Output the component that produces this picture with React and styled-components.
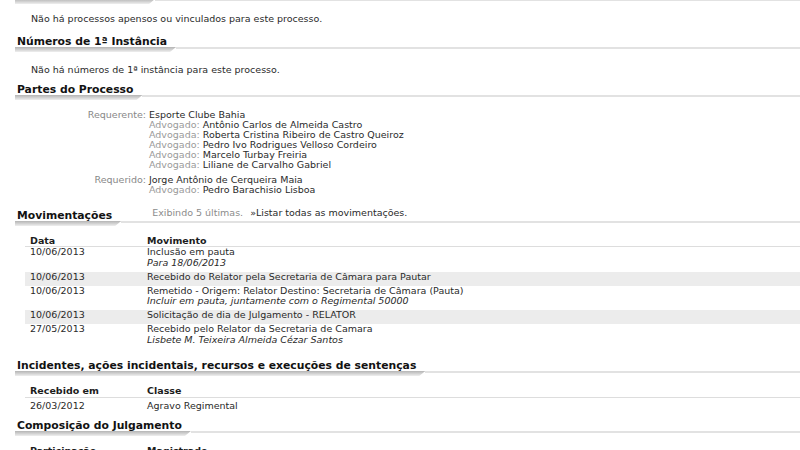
import React from "react";
import styled, { createGlobalStyle } from "styled-components";

const GlobalStyle = createGlobalStyle`
  html, body { margin: 0; padding: 0; background: #fff; }
  body {
    width: 800px;
    height: 450px;
    overflow: hidden;
    font-family: "DejaVu Sans", Verdana, sans-serif;
    font-size: 9.5px;
    color: #2a2a2a;
  }
`;

/* the page is scrolled a little: the first heading sits just above the fold */
const Page = styled.main`
  margin-top: -12px;
  padding-left: 15px;
`;

const Section = styled.section``;

const Heading = styled.h2`
  display: flex;
  align-items: flex-end;
  margin: 0;
  font: bold 10.8px/12px "DejaVu Sans", Verdana, sans-serif;
  color: #121212;
`;

const HeadingTitle = styled.span`
  position: relative;
  z-index: 0;
  padding: 0 9px 4px 2px;
  white-space: nowrap;

  &::after {
    content: "";
    position: absolute;
    z-index: -1;
    left: 0;
    right: 0;
    bottom: 0;
    height: 5px;
    background: linear-gradient(#b4b4b4, #d4d4d4 55%, #efefef);
    clip-path: polygon(0 0, 100% 0, calc(100% - 6px) 100%, 0 100%);
  }
`;

const HeadingRule = styled.div`
  flex: 1;
  display: flex;
  align-items: flex-end;
  gap: 7px;
  margin-bottom: 3px;
  padding: 0 0 ${(p) => (p.$inset ? 3 : 0)}px ${(p) => p.$inset || 0}px;
  border-bottom: 2px solid #e2e2e2;
  font: 9.5px/10px "DejaVu Sans", Verdana, sans-serif;
  color: #2a2a2a;
`;

const Hint = styled.span`
  color: #8c8c8c;
`;

const HintLink = styled.a`
  color: #2a2a2a;
  text-decoration: none;
`;

const Note = styled.p`
  margin: 0;
  padding: ${(p) => (p.$tight ? "8.5px 0 12.5px 16px" : "11.5px 0 9.5px 16px")};
  line-height: 11px;
`;

const Parties = styled.div`
  display: grid;
  grid-template-columns: 131px 1fr;
  column-gap: 3px;
  row-gap: 5px;
  padding: 10px 0 13px;
  line-height: 10px;
`;

const PartyRole = styled.div`
  text-align: right;
  color: #888888;
`;

const PartyNames = styled.div``;

const Counsel = styled.div``;

const CounselRole = styled.span`
  color: #9a9a9a;
`;

const SectionBody = styled.div`
  padding: ${(p) => p.$top}px 0 ${(p) => p.$bottom}px 10px;
`;

const Table = styled.table`
  width: 100%;
  border-collapse: collapse;
  line-height: 10px;

  th {
    text-align: left;
    font-weight: bold;
    color: #1c1c1c;
    padding: 0 0 ${(p) => p.$headPad ?? 1}px 5px;
    border-bottom: 1px solid #dddddd;
  }

  th:first-child,
  td:first-child {
    width: 112px;
  }

  td {
    vertical-align: top;
    line-height: 10.5px;
    padding: ${(p) => p.$rowPad || "0 0 3.5px 5px"};
  }

  tbody tr:nth-child(even) td {
    background: #ececec;
  }
`;

const Detail = styled.div`
  font-style: italic;
`;

const movements = [
  { date: "10/06/2013", text: "Inclusão em pauta", detail: "Para 18/06/2013" },
  { date: "10/06/2013", text: "Recebido do Relator pela Secretaria de Câmara para Pautar" },
  {
    date: "10/06/2013",
    text: "Remetido - Origem: Relator Destino: Secretaria de Câmara (Pauta)",
    detail: "Incluir em pauta, juntamente com o Regimental 50000",
  },
  { date: "10/06/2013", text: "Solicitação de dia de Julgamento - RELATOR" },
  {
    date: "27/05/2013",
    text: "Recebido pelo Relator da Secretaria de Camara",
    detail: "Lisbete M. Teixeira Almeida Cézar Santos",
  },
];

const parties = [
  {
    role: "Requerente:",
    name: "Esporte Clube Bahia",
    counsel: [
      ["Advogado:", "Antônio Carlos de Almeida Castro"],
      ["Advogada:", "Roberta Cristina Ribeiro de Castro Queiroz"],
      ["Advogado:", "Pedro Ivo Rodrigues Velloso Cordeiro"],
      ["Advogado:", "Marcelo Turbay Freiria"],
      ["Advogada:", "Liliane de Carvalho Gabriel"],
    ],
  },
  {
    role: "Requerido:",
    name: "Jorge Antônio de Cerqueira Maia",
    counsel: [["Advogado:", "Pedro Barachisio Lisboa"]],
  },
];

function SectionHeading({ title, children, inset }) {
  return (
    <Heading>
      <HeadingTitle>{title}</HeadingTitle>
      <HeadingRule $inset={inset}>{children}</HeadingRule>
    </Heading>
  );
}

export default function App() {
  return (
    <>
      <GlobalStyle />
      <Page>
        <Section>
          <SectionHeading title="Apensos / Vinculados" />
          <Note $tight>Não há processos apensos ou vinculados para este processo.</Note>
        </Section>

        <Section>
          <SectionHeading title="Números de 1ª Instância" />
          <Note>Não há números de 1ª instância para este processo.</Note>
        </Section>

        <Section>
          <SectionHeading title="Partes do Processo" />
          <Parties>
            {parties.map((p) => (
              <React.Fragment key={p.role}>
                <PartyRole>{p.role}</PartyRole>
                <PartyNames>
                  <div>{p.name}</div>
                  {p.counsel.map(([role, name]) => (
                    <Counsel key={name}>
                      <CounselRole>{role}</CounselRole> {name}
                    </Counsel>
                  ))}
                </PartyNames>
              </React.Fragment>
            ))}
          </Parties>
        </Section>

        <Section>
          <SectionHeading title="Movimentações" inset={31}>
            <Hint>Exibindo 5 últimas.</Hint>
            <HintLink href="#movimentacoes">»Listar todas as movimentações.</HintLink>
          </SectionHeading>
          <SectionBody $top={10} $bottom={11.5}>
            <Table $headPad={0}>
              <thead>
                <tr>
                  <th>Data</th>
                  <th>Movimento</th>
                </tr>
              </thead>
              <tbody>
                {movements.map((m, i) => (
                  <tr key={i}>
                    <td>{m.date}</td>
                    <td>
                      {m.text}
                      {m.detail && <Detail>{m.detail}</Detail>}
                    </td>
                  </tr>
                ))}
              </tbody>
            </Table>
          </SectionBody>
        </Section>

        <Section>
          <SectionHeading title="Incidentes, ações incidentais, recursos e execuções de sentenças" />
          <SectionBody $top={10} $bottom={5.5}>
            <Table $rowPad="2.5px 0 3.5px 5px">
              <thead>
                <tr>
                  <th>Recebido em</th>
                  <th>Classe</th>
                </tr>
              </thead>
              <tbody>
                <tr>
                  <td>26/03/2012</td>
                  <td>Agravo Regimental</td>
                </tr>
              </tbody>
            </Table>
          </SectionBody>
        </Section>

        <Section>
          <SectionHeading title="Composição do Julgamento" />
          <SectionBody $top={10} $bottom={10}>
            <Table>
              <thead>
                <tr>
                  <th>Participação</th>
                  <th>Magistrado</th>
                </tr>
              </thead>
            </Table>
          </SectionBody>
        </Section>
      </Page>
    </>
  );
}
